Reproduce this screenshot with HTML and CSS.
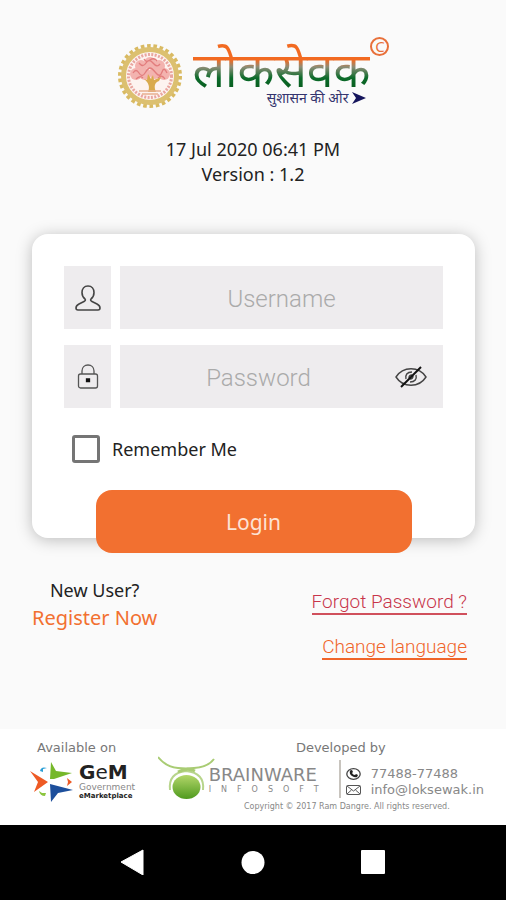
FILE: index.html
```html
<!DOCTYPE html>
<html lang="en">
<head>
  <meta charset="UTF-8">
  <meta name="viewport" content="width=device-width, initial-scale=1.0">
  <title>Login</title>
  <link rel="stylesheet" href="styles.css">
</head>
<body>
  <header class="header">
    <div class="logo">
      <svg class="seal" viewBox="0 0 66 66">
        <circle cx="33" cy="33" r="30" fill="none" stroke="#d9ba62" stroke-width="4" stroke-dasharray="3.6 2.683"/>
        <circle cx="33" cy="33" r="26.5" fill="#fdf3f0" stroke="#dcc070" stroke-width="5"/>
        <circle cx="33" cy="33" r="21.5" fill="none" stroke="#e9a6a0" stroke-width="3" stroke-dasharray="2 1.4"/>
        <g fill="#f3b3af">
          <circle cx="33" cy="20" r="6"/>
          <circle cx="24" cy="23" r="6"/>
          <circle cx="42" cy="23" r="6"/>
          <circle cx="19" cy="31" r="6"/>
          <circle cx="47" cy="31" r="6"/>
          <circle cx="28" cy="31" r="6"/>
          <circle cx="38" cy="30" r="6"/>
        </g>
        <path d="M16 30q3-5 6 0t6 0 5-5 6 5 6-1 5 1M22 20q4 5 7 0t7 0 7 1M19 36q4-4 7-1M41 35q4-4 7 1M27 16q2 4 6 1t7 1" fill="none" stroke="#e27d7d" stroke-width="1.3"/>
        <path d="M31 49c2-5 1-9-4-13l3 1 1-6 3 5 2-4 1 5 7-3-2 4c-5 2-5 6-3 11z" fill="#d9aa4e"/>
        <path d="M22 48h22M25 51h16" stroke="#e7b08e" stroke-width="1.4"/>
      </svg>
      <div class="brand">
        <div class="brand-name" lang="hi">लोकसेवक</div>
        <div class="brand-tagline" lang="hi">सुशासन की ओर
          <svg class="arrow" viewBox="0 0 14 12"><path d="M0 0l14 6-14 6 4-6z" fill="#15155c"/></svg>
        </div>
      </div>
      <span class="copyright-mark">C</span>
    </div>
    <p class="info">17 Jul 2020 06:41 PM<br>Version : 1.2</p>
  </header>

  <main class="main">
    <form class="login-form">
      <div class="card">
        <div class="field">
          <label class="field-icon" for="username" aria-label="Username">
            <svg width="26" height="26" viewBox="0 0 26 26" fill="none" stroke="#444" stroke-width="1.6">
              <path d="M13 1C9 1 7 4 7 7.500c0 3 1 5 3 6.500 1 1 0 2-1 2.500L4 19c-2 1-3 2.500-3 4 0 1.500.5 2 2 2h20c1.500 0 2-.5 2-2 0-1.500-1-3-3-4l-5-2.500c-1-.5-2-1.500-1-2.500 2-1.500 3-3.500 3-6.500C19 4 17 1 13 1z"/>
            </svg>
          </label>
          <input class="field-input" type="text" id="username" placeholder="Username">
        </div>
        <div class="field">
          <label class="field-icon" for="password" aria-label="Password">
            <svg width="22" height="26" viewBox="0 0 22 26" fill="none" stroke="#555" stroke-width="1.3">
              <rect x="1.500" y="10" width="19" height="14" rx="2"/>
              <path d="M5 10V7c0-3.500 2.500-6 6-6s6 2.500 6 6v3"/>
              <path d="M9.500 15h3v2.500h-3z" fill="#111" stroke="#111"/>
            </svg>
          </label>
          <input class="field-input password-input" type="password" id="password" placeholder="Password">
          <button class="toggle-password" type="button" id="togglePassword" aria-label="Show password">
            <svg width="32" height="24" viewBox="0 0 32 24" fill="none" stroke="#444" stroke-width="1.400">
              <path d="M1 12C8 1 24 1 31 12 24 23 8 23 1 12z"/>
              <path d="M11 14c-1-4 1-7 6-7M21 10c1 4-1 7-6 7M14 13c0-2 1-3 3-3M18 11c0 2-1 3-3 3"/>
              <path d="M26 2L6 22" stroke="#111" stroke-width="2"/>
            </svg>
          </button>
        </div>
        <label class="remember">
          <input class="remember-box" type="checkbox">
          Remember Me
        </label>
      </div>
      <button class="login-button" type="submit">Login</button>
    </form>

    <div class="links">
      <div class="register">
        <span>New User?</span>
        <a class="register-link" href="#">Register Now</a>
      </div>
      <div class="account-links">
        <a class="forgot-link" href="#">Forgot Password ?</a>
        <a class="language-link" href="#">Change language</a>
      </div>
    </div>
  </main>

  <footer class="footer">
    <div class="available">
      <div class="footer-title">Available on</div>
      <div class="gem">
        <svg width="43" height="40" viewBox="0 0 43 40">
          <path d="M21 0l5 9 16 2-18 6-4 0z" fill="#76b82a"/>
          <path d="M0 9l18 11-14 10 4-10z" fill="#ee5a24"/>
          <path d="M20 22l23 6-15 3-7 9z" fill="#1d4f9c"/>
          <path d="M10 9q1-5 7-3l-4 1 0 3z" fill="#2b9fd6"/>
          <path d="M37 16l5 4-5 4 1-4z" fill="#ee5a24"/>
          <path d="M9 29l3 2 4 0-1 3q-5 0-6-5z" fill="#8cc63f"/>
        </svg>
        <div class="gem-text">
          <div class="gem-name">G<span class="gem-light">e</span>M</div>
          <div class="gem-line">Government</div>
          <div class="gem-market">eMarketplace</div>
        </div>
      </div>
    </div>
    <div class="developer">
      <div class="footer-title">Developed by</div>
      <div class="developer-row">
        <div class="brainware">
          <svg class="brainware-logo" width="57" height="45" viewBox="0 0 57 45">
            <defs>
              <linearGradient id="ball" x1="0" y1="0" x2="0" y2="1">
                <stop offset="0" stop-color="#b3d66a"/>
                <stop offset="1" stop-color="#4f9a1e"/>
              </linearGradient>
            </defs>
            <g fill="none" stroke="#a9cc74" stroke-width="2">
              <path d="M0 1q8 10 20 11 8 1 16 0 14-1 20-9"/>
              <path d="M12 34q-2-17 16-19 19 2 17 19" stroke="#b8d58c"/>
              <path d="M20 16q9-5 17-1" stroke-width="3"/>
            </g>
            <ellipse cx="28.500" cy="31" rx="14" ry="12" fill="url(#ball)"/>
          </svg>
          <div class="brainware-text">
            <div class="brainware-name">BRAINWARE</div>
            <div class="brainware-sub">INFOSOFT</div>
          </div>
        </div>
        <div class="contact">
          <div class="contact-item">
            <svg width="15" height="12" viewBox="0 0 15 12">
              <ellipse cx="7.500" cy="6" rx="6.700" ry="5.300" fill="#fff" stroke="#444" stroke-width="1.300"/>
              <path d="M4 2.500l2-.5 1 2-1 1q1 2 3 2l1-1 2 1-1 2q-2 1-5-1T4 2.500z" fill="#222"/>
            </svg>
            77488-77488
          </div>
          <div class="contact-item">
            <svg width="15" height="10" viewBox="0 0 15 10" fill="none" stroke="#555">
              <rect x=".5" y=".5" width="14" height="9" rx="1"/>
              <path d="M1 1l6.500 5L14 1M1 9l4.500-4M14 9L9.500 5"/>
            </svg>
            info@loksewak.in
          </div>
        </div>
      </div>
      <div class="copyright">Copyright © 2017 Ram Dangre. All rights reserved.</div>
    </div>
  </footer>

  <nav class="nav-bar">
    <button class="nav-button" type="button" aria-label="Back">
      <svg width="26" height="26" viewBox="0 0 26 26"><path d="M1 13L23 1v25z" fill="#fff" stroke="#fff" stroke-linejoin="round"/></svg>
    </button>
    <button class="nav-button" type="button" aria-label="Home">
      <svg width="26" height="26" viewBox="0 0 26 26"><circle cx="13" cy="13.500" r="11.500" fill="#fff"/></svg>
    </button>
    <button class="nav-button" type="button" aria-label="Recent apps">
      <svg width="26" height="26" viewBox="0 0 26 26"><rect x="1" y="1" width="24" height="24" rx="1" fill="#fff"/></svg>
    </button>
  </nav>

  <script>
    const password = document.getElementById('password');
    const togglePassword = document.getElementById('togglePassword');

    // Show or hide the password
    togglePassword.addEventListener('click', () => {
      password.type = password.type === 'password' ? 'text' : 'password';
    });
  </script>
</body>
</html>
```

FILE: styles.css
```css
* {
  box-sizing: border-box;
}
body {
  font-family: "Noto Sans", sans-serif;
  font-size: 18px;
  margin: 0;
  min-height: 100vh;
  display: flex;
  flex-direction: column;
  background-color: #fafafa;
  color: #222;
}
svg {
  display: block;
  flex-shrink: 0;
}
button {
  font-family: inherit;
  border: none;
  cursor: pointer;
}
.header {
  padding-top: 36px;
  text-align: center;
}
.logo {
  display: flex;
  justify-content: center;
  height: 76px;
}
.seal {
  width: 66px;
  height: 66px;
  margin-top: 7px;
}
.brand {
  margin-left: 10px;
}
.brand-name {
  padding-top: 12px;
  font-size: 48px;
  line-height: 42px;
  background: linear-gradient(#f26a21 0, #f26a21 24px, #8d8d78 31px, #0b6b2a 42px, #075a1c 54px);
  -webkit-background-clip: text;
  background-clip: text;
  color: transparent;
}
.brand-tagline {
  display: flex;
  justify-content: flex-end;
  align-items: center;
  gap: 4px;
  padding-right: 4px;
  font-size: 14px;
  line-height: 16px;
  color: #34346e;
}
.arrow {
  width: 14px;
  height: 12px;
}
.copyright-mark {
  width: 19px;
  height: 19px;
  margin-top: 1px;
  border: 2px solid #e8703a;
  border-radius: 50%;
  font-size: 15px;
  line-height: 15px;
  color: #e8703a;
}
.info {
  margin: 25px 0 0;
  line-height: 25px;
}
.main {
  flex: 1;
  padding: 47px 31px 32px 32px;
}
.login-form {
  display: flex;
  flex-direction: column;
  align-items: center;
}
.card {
  width: 100%;
  padding: 32px 32px 74px;
  display: flex;
  flex-direction: column;
  gap: 16px;
  background-color: #fff;
  border-radius: 16px;
  box-shadow: 0 2px 16px rgba(0, 0, 0, 0.25);
}
.field {
  position: relative;
  display: flex;
  gap: 9px;
  height: 63px;
}
.field-icon {
  width: 47px;
  display: flex;
  align-items: center;
  justify-content: center;
  background-color: #eeecee;
}
.field-input {
  flex: 1;
  min-width: 0;
  border: none;
  border-radius: 0;
  outline: none;
  padding: 2px 16px 0;
  background-color: #eeecee;
  font-family: Roboto, sans-serif;
  font-size: 24px;
  font-weight: 300;
  text-align: center;
}
.password-input {
  padding-right: 62px;
}
.field-input::placeholder {
  color: #aaa;
}
.toggle-password {
  position: absolute;
  top: 20px;
  right: 16px;
  padding: 0;
  background: none;
}
.remember {
  display: flex;
  align-items: center;
  gap: 12px;
  padding: 10px 8px 0;
  height: 40px;
}
.remember-box {
  appearance: none;
  width: 28px;
  height: 28px;
  margin: 0;
  border: 3px solid #757575;
  border-radius: 3px;
}
.remember-box:checked {
  background-color: #f27030;
}
.login-button {
  width: 316px;
  height: 63px;
  margin-top: -48px;
  background-color: #f27030;
  border-radius: 16px;
  font-size: 21px;
  color: #fde3d5;
  z-index: 1;
}
.links {
  display: flex;
  justify-content: space-between;
  padding-top: 24px;
}
.register {
  display: flex;
  flex-direction: column;
  align-items: center;
  line-height: 27px;
}
.register-link {
  font-size: 20px;
  color: #f27030;
  text-decoration: none;
}
.account-links {
  display: flex;
  flex-direction: column;
  align-items: flex-end;
  gap: 21px;
  padding: 14px 8px 0 0;
  font-family: Roboto, sans-serif;
  font-size: 19px;
  font-weight: 300;
  line-height: 22px;
}
.forgot-link,
.language-link {
  color: #c8354a;
  text-decoration: none;
  border-bottom: 2px solid #d0505c;
}
.language-link {
  color: #f0652a;
  border-color: #f0652a;
}
.footer {
  display: flex;
  justify-content: space-between;
  height: 96px;
  padding: 11px 22px 0 30px;
  background-color: #fff;
  font-family: "DejaVu Sans", sans-serif;
  font-size: 13px;
  color: #888;
}
.footer-title {
  line-height: 16px;
  color: #777;
}
.available .footer-title {
  padding-left: 7px;
}
.gem {
  display: flex;
  gap: 6px;
  padding-top: 6px;
}
.gem-name {
  font-size: 20px;
  line-height: 20px;
  font-weight: bold;
  color: #222;
}
.gem-light {
  font-weight: normal;
}
.gem-line {
  font-size: 9px;
  line-height: 10px;
}
.gem-market {
  font-size: 7px;
  line-height: 8px;
  font-weight: bold;
  color: #222;
}
.developer {
  display: flex;
  flex-direction: column;
  align-items: center;
}
.developer .footer-title {
  padding-left: 40px;
}
.developer-row {
  display: flex;
  gap: 20px;
}
.brainware {
  display: flex;
}
.brainware-logo {
  margin-right: -6px;
}
.brainware-text {
  padding-top: 9px;
}
.brainware-name {
  font-size: 18px;
  line-height: 20px;
}
.brainware-sub {
  font-size: 8px;
  line-height: 10px;
  letter-spacing: 10px;
  margin-right: -10px;
}
.contact {
  height: 38px;
  margin-top: 4px;
  padding: 6px 0 0 5px;
  border-left: 2px solid #c8c4be;
  line-height: 16px;
}
.contact-item {
  display: flex;
  align-items: center;
  gap: 10px;
}
.copyright {
  padding-left: 52px;
  font-size: 8px;
  line-height: 12px;
}
.nav-bar {
  display: flex;
  justify-content: center;
  gap: 94px;
  height: 75px;
  padding-top: 24px;
  background-color: #000;
}
.nav-button {
  height: 26px;
  padding: 0;
  background: none;
}
```
